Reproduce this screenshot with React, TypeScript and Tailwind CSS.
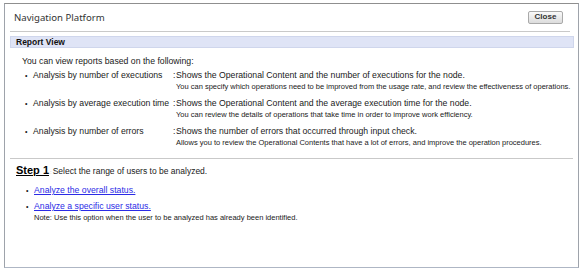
const rows = [
  {
    label: 'Analysis by number of executions',
    main: 'Shows the Operational Content and the number of executions for the node.',
    sub: 'You can specify which operations need to be improved from the usage rate, and review the effectiveness of operations.',
  },
  {
    label: 'Analysis by average execution time',
    main: 'Shows the Operational Content and the average execution time for the node.',
    sub: 'You can review the details of operations that take time in order to improve work efficiency.',
  },
  {
    label: 'Analysis by number of errors',
    main: 'Shows the number of errors that occurred through input check.',
    sub: 'Allows you to review the Operational Contents that have a lot of errors, and improve the operation procedures.',
  },
];

export default function App() {
  return (
    <div className="w-[585px] h-[273px] bg-white pl-[4px] pt-[3px] font-['Liberation_Sans',Arial,sans-serif] text-[#1a1a1a]">
      <div className="w-[575px] h-[265px] border border-[#9ea3ab] border-t-[#8f8f8f] border-b-[#aeb6c4] flex flex-col">
        {/* header */}
        <div className="h-[27px] flex items-center justify-between pl-[9px] pr-[15px]">
          <span className="font-['Noto_Sans',sans-serif] text-[9.6px] text-[#333] leading-none">Navigation Platform</span>
          <button className="w-[35px] h-[13px] mt-[-1px] border border-[#a9a9a9] rounded-[2px] bg-gradient-to-b from-[#fafafa] to-[#dcdcdc] text-[8px] font-bold text-[#333] leading-none flex items-center justify-center">
            Close
          </button>
        </div>
        <div className="ml-[5px] mr-[8px] border-b border-[#c9c9c9]" />

        {/* Report View bar */}
        <div className="ml-[5px] mr-[4px] mt-[4px] h-[12px] bg-[#dfe4f6] border border-[#cfd6ec] flex items-center pl-[5px]">
          <span className="text-[8.5px] font-bold text-[#111] leading-none">Report View</span>
        </div>

        <div className="pl-[17px] pt-[8px] text-[8.7px] leading-[11px]">
          You can view reports based on the following:
        </div>

        <div className="flex flex-col gap-[6px] pt-[3px]">
          {rows.map((r) => (
            <div key={r.label} className="flex">
              <div className="w-[28px] pl-[20px] text-[7px] leading-[11px]">•</div>
              <div className="w-[140px] text-[8.7px] leading-[11px] whitespace-nowrap">{r.label}</div>
              <div className="w-[3px] text-[8.7px] leading-[11px]">:</div>
              <div className="flex flex-col">
                <span className="text-[8.7px] leading-[11px] whitespace-nowrap">{r.main}</span>
                <span className="text-[7.5px] leading-[11px] whitespace-nowrap">{r.sub}</span>
              </div>
            </div>
          ))}
        </div>

        <div className="ml-[5px] mr-[5px] mt-[10px] border-b border-[#c9c9c9]" />

        {/* Step 1 */}
        <div className="flex items-baseline pl-[11px] pt-[4px]">
          <span className="text-[11px] font-bold underline leading-[14px] text-black">Step 1</span>
          <span className="text-[6px] text-[#aaa] px-[1px]">:</span>
          <span className="text-[8.5px] leading-[14px]">Select the range of users to be analyzed.</span>
        </div>

        <div className="flex flex-col gap-[5px] pt-[7px]">
          <div className="flex">
            <div className="w-[29px] pl-[21px] text-[7px] leading-[11px]">•</div>
            <a href="#" className="text-[8.7px] leading-[11px] text-[#2b2be6] underline">
              Analyze the overall status.
            </a>
          </div>
          <div className="flex">
            <div className="w-[29px] pl-[21px] text-[7px] leading-[11px]">•</div>
            <div className="flex flex-col">
              <a href="#" className="text-[8.7px] leading-[11px] text-[#2b2be6] underline">
                Analyze a specific user status.
              </a>
              <span className="text-[7.5px] leading-[11px]">
                Note: Use this option when the user to be analyzed has already been identified.
              </span>
            </div>
          </div>
        </div>
      </div>
    </div>
  );
}
